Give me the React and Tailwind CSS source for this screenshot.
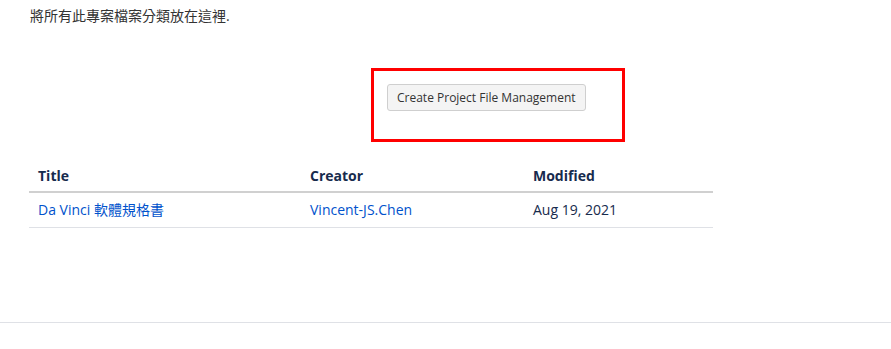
export default function App() {
  const rows = [
    { title: 'Da Vinci 軟體規格書', creator: 'Vincent-JS.Chen', modified: 'Aug 19, 2021' },
  ];

  return (
    <div
      className="w-[891px] h-[349px] bg-white text-[14px] text-[#172b4d] overflow-hidden"
      style={{ fontFamily: '"Open Sans", "Noto Sans CJK TC", sans-serif' }}
    >
      <div className="pl-[30px] pt-[6px] h-[30px] leading-[20px] text-[#333]">將所有此專案檔案分類放在這裡.</div>

      <div className="flex pl-[371px] pt-[38px]">
        <div className="w-[254px] h-[74px] border-[3px] border-[#ff0000] pl-[13px] pt-[13px]">
          <button className="h-[27px] px-[9px] bg-[#f4f4f4] border border-[#cfcfcf] rounded-[3px] text-[12px] text-[#333] leading-[25px]">
            Create Project File Management
          </button>
        </div>
      </div>

      <table className="ml-[29px] mt-[18px] w-[684px] border-collapse">
        <thead>
          <tr className="border-b-2 border-[#d0d0d0]">
            <th className="w-[272px] text-left font-bold px-[9px] h-[32px] align-middle">Title</th>
            <th className="w-[223px] text-left font-bold px-[9px] align-middle">Creator</th>
            <th className="text-left font-bold px-[9px] align-middle">Modified</th>
          </tr>
        </thead>
        <tbody>
          {rows.map((r) => (
            <tr key={r.title} className="border-b border-[#dfe1e6]">
              <td className="px-[9px] h-[35px] text-[#0052cc]">{r.title}</td>
              <td className="px-[9px] text-[#0052cc]">{r.creator}</td>
              <td className="px-[9px]">{r.modified}</td>
            </tr>
          ))}
        </tbody>
      </table>

      <div className="mt-[94px] border-t border-[#dfe1e6]" />
    </div>
  );
}
